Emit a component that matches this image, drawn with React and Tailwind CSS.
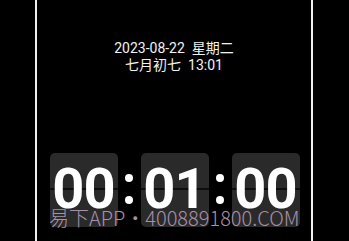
import React from "react";

function Card({ text }) {
  return (
    <div className="relative w-[68px] h-[74px] rounded-[5px] bg-[#2a2a2a] flex items-center justify-center overflow-visible">
      <div className="absolute left-0 right-0 top-[35px] h-[2px] bg-[#0e0e0e]" />
      <span
        className="relative text-white font-bold text-[56px] leading-[56px] pb-[3px] tracking-[-1px]"
        style={{ fontFamily: "Roboto, 'Noto Sans', sans-serif" }}
      >
        {text}
      </span>
    </div>
  );
}

function Colon() {
  return (
    <div className="w-[23px] h-[74px] flex flex-col items-center pt-[21px] gap-[14px]">
      <div className="w-[8px] h-[8px] rounded-full bg-white" />
      <div className="w-[8px] h-[8px] rounded-full bg-white" />
    </div>
  );
}

export default function App() {
  return (
    <div className="w-[349px] h-[241px] bg-black flex overflow-hidden">
      <div className="w-[35px] h-full bg-black" />
      <div className="w-[2px] h-full bg-[#f0f0f0]" />
      <div className="relative w-[274px] h-full bg-black flex flex-col items-center">
        <div
          className="mt-[40px] text-[14px] leading-[17px] text-[#f2f2f2] text-center"
          style={{ fontFamily: "Roboto, 'Noto Sans CJK SC', sans-serif" }}
        >
          <div className="whitespace-pre">2023-08-22  星期二</div>
          <div className="whitespace-pre">七月初七  13:01</div>
        </div>
        <div className="mt-[79px] flex items-start pl-[1px]">
          <Card text="00" />
          <Colon />
          <Card text="01" />
          <Colon />
          <Card text="00" />
        </div>
        <div
          className="absolute left-[12px] top-[206px] text-[20px] leading-[24px] text-[#a890a8] whitespace-nowrap"
          style={{ fontFamily: "'Noto Sans CJK SC', 'Noto Sans', sans-serif", fontWeight: 300 }}
        >
          易下APP・4008891800.COM
        </div>
      </div>
      <div className="w-[2px] h-full bg-[#f0f0f0]" />
      <div className="flex-1 h-full bg-black" />
    </div>
  );
}
